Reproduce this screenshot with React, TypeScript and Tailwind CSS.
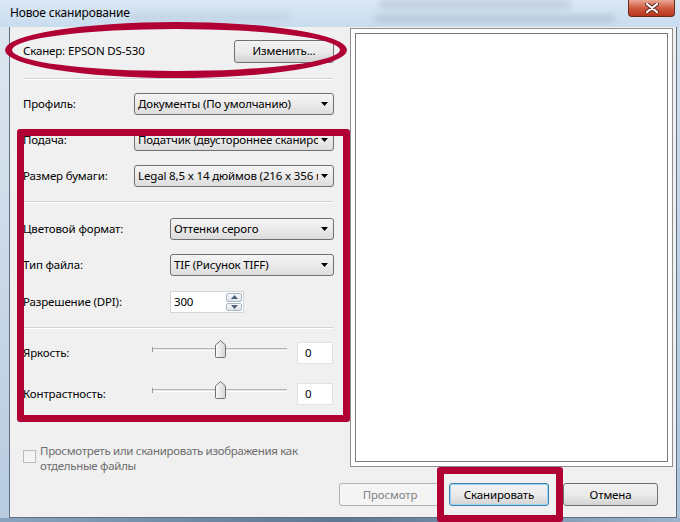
import React from "react";

function Combo({ width, text }: { width: string; text: string }) {
  return (
    <div
      className={`flex h-[22px] ${width} items-center rounded-[3px] border border-[#707070] bg-gradient-to-b from-[#f4f4f4] via-[#ebebeb] to-[#dcdcdc]`}
    >
      <span className="flex-1 overflow-hidden whitespace-nowrap pl-[3px]">{text}</span>
      <svg width="7" height="4" className="ml-[3px] mr-[5px] shrink-0">
        <path d="M0 0h7L3.5 4z" fill="#000" />
      </svg>
    </div>
  );
}

function Slider() {
  return (
    <div className="relative h-[22px] w-[135px]">
      {/* track */}
      <div className="absolute left-0 right-0 top-[6px] h-[3px] border-t border-b border-t-[#b5b5b5] border-b-white bg-[#e3e3e3]" />
      <div className="absolute left-0 top-[5px] h-[5px] w-px bg-[#9a9a9a]" />
      {/* thumb */}
      <svg className="absolute left-[63px] top-[-2px]" width="11" height="18">
        <defs>
          <linearGradient id="th" x1="0" y1="0" x2="1" y2="0">
            <stop offset="0" stopColor="#fbfbfb" />
            <stop offset="1" stopColor="#d4d4d4" />
          </linearGradient>
        </defs>
        <path d="M0.5 16.5V5L5.5 0.5L10.5 5V16.5Q10.5 17.5 9.5 17.5H1.5Q0.5 17.5 0.5 16.5Z" fill="url(#th)" stroke="#707070" />
      </svg>
    </div>
  );
}

function Btn({
  children,
  width,
  kind,
}: {
  children: React.ReactNode;
  width: string;
  kind: "disabled" | "default" | "normal";
}) {
  const look =
    kind === "disabled"
      ? "border-[#adb2b5] bg-[#f4f4f4] text-[#838383]"
      : kind === "default"
        ? "border-[#3c7fb1] bg-gradient-to-b from-[#f2f2f2] via-[#ebebeb] to-[#d3d3d3] shadow-[inset_0_0_0_1px_#9fd5f1] text-black"
        : "border-[#707070] bg-gradient-to-b from-[#f2f2f2] via-[#ebebeb] to-[#d3d3d3] text-black";
  return (
    <div className={`flex h-[23px] ${width} items-center justify-center rounded-[3px] border ${look}`}>
      {children}
    </div>
  );
}

export default function App() {
  return (
    <div className="relative flex h-[522px] w-[680px] flex-col overflow-hidden bg-[#c7d9ec] font-['Noto_Sans',sans-serif] text-[11.5px] tracking-[-0.15px] text-black">
      {/* Title bar (glass) */}
      <div className="relative flex h-[27px] items-start overflow-hidden bg-gradient-to-b from-[#dae7f4] to-[#c9dcef]">
        <div className="absolute left-[380px] top-[1px] h-[7px] w-[190px] bg-[#7f8fa0] opacity-30 blur-[3px]" />
        <div className="absolute left-[375px] top-[15px] h-[7px] w-[240px] bg-[#6f8094] opacity-25 blur-[3px]" />
        <div className="absolute left-[130px] top-[14px] h-[6px] w-[160px] bg-[#8797a8] opacity-20 blur-[3px]" />
        <span className="relative ml-[10px] mt-[5px] text-[12px] leading-[16px]">Новое сканирование</span>
        <div className="relative ml-auto mr-[5px] flex h-[17px] w-[47px] items-center justify-center rounded-b-[4px] border border-t-0 border-[#6b2a1e] bg-gradient-to-b from-[#e9a795] via-[#cf5a40] to-[#b8341d]">
          <svg width="14" height="10">
            <path d="M2 1L12 9M12 1L2 9" stroke="#5a2a22" strokeWidth="4" strokeLinecap="round" />
            <path d="M2 1L12 9M12 1L2 9" stroke="#ffffff" strokeWidth="2.2" strokeLinecap="round" />
          </svg>
        </div>
      </div>

      <div className="flex h-[491px]">
        <div className="w-[9px] bg-gradient-to-b from-[#dde6ef] to-[#b8cbe0]" />
        <div className="flex w-[668px] flex-col border-x border-b border-[#5f6f80] bg-[#f0f0f0]">
          <div className="flex items-start">
            {/* Left settings panel */}
            <div className="flex w-[340px] flex-col pl-[13px]">
              <div className="mt-[13px] flex h-[22px] w-[311px] items-center justify-between">
                <span>Сканер: EPSON DS-530</span>
                <Btn width="w-[100px]" kind="normal">
                  Изменить...
                </Btn>
              </div>
              <div className="mt-[16px] h-[2px] w-[310px] border-t border-b border-t-[#d2d2d2] border-b-white" />

              <div className="mt-[13px] flex items-center">
                <span className="w-[111px]">Профиль:</span>
                <Combo width="w-[200px]" text="Документы (По умолчанию)" />
              </div>
              <div className="mt-[14px] flex items-center">
                <span className="w-[111px]">Подача:</span>
                <Combo width="w-[200px]" text="Податчик (двустороннее сканирование)" />
              </div>
              <div className="mt-[14px] flex items-center">
                <span className="w-[111px]">Размер бумаги:</span>
                <Combo width="w-[200px]" text="Legal 8,5 x 14 дюймов (216 x 356 мм)" />
              </div>
              <div className="mt-[14px] h-[2px] w-[310px] border-t border-b border-t-[#d2d2d2] border-b-white" />

              <div className="mt-[15px] flex items-center">
                <span className="w-[147px]">Цветовой формат:</span>
                <Combo width="w-[164px]" text="Оттенки серого" />
              </div>
              <div className="mt-[14px] flex items-center">
                <span className="w-[147px]">Тип файла:</span>
                <Combo width="w-[164px]" text="TIF (Рисунок TIFF)" />
              </div>
              <div className="mt-[15px] flex items-center">
                <span className="w-[147px]">Разрешение (DPI):</span>
                <div className="flex h-[22px] w-[74px] border border-[#d5d5d5] bg-white">
                  <span className="flex-1 pl-[3px] leading-[20px]">300</span>
                  <div className="flex w-[17px] flex-col gap-px py-px pr-px">
                    <div className="flex flex-1 items-center justify-center rounded-[2px] border border-[#a9b6c4] bg-gradient-to-b from-[#f6f7f8] to-[#dfe4ea]">
                      <svg width="7" height="4">
                        <path d="M0 4h7L3.5 0z" fill="#4c607a" />
                      </svg>
                    </div>
                    <div className="flex flex-1 items-center justify-center rounded-[2px] border border-[#a9b6c4] bg-gradient-to-b from-[#f6f7f8] to-[#dfe4ea]">
                      <svg width="7" height="4">
                        <path d="M0 0h7L3.5 4z" fill="#4c607a" />
                      </svg>
                    </div>
                  </div>
                </div>
              </div>
              <div className="mt-[14px] h-[2px] w-[310px] border-t border-b border-t-[#d2d2d2] border-b-white" />

              <div className="mt-[13px] flex items-center">
                <span className="w-[129px]">Яркость:</span>
                <Slider />
                <div className="ml-[10px] flex h-[22px] w-[36px] items-center border border-[#e2e2e2] bg-white pl-[7px]">0</div>
              </div>
              <div className="mt-[19px] flex items-center">
                <span className="w-[129px]">Контрастность:</span>
                <Slider />
                <div className="ml-[10px] flex h-[22px] w-[36px] items-center border border-[#e2e2e2] bg-white pl-[7px]">0</div>
              </div>

              <div className="mt-[38px] flex items-start">
                <div className="mt-[7px] h-[13px] w-[13px] shrink-0 border border-[#bcbcbc] bg-gradient-to-br from-[#f0f0f0] to-[#f8f8f8]" />
                <span className="ml-[4px] text-[11.5px] leading-[15px] tracking-[-0.3px] text-[#6d6d6d]">
                  Просмотреть или сканировать изображения как
                  <br />
                  отдельные файлы
                </span>
              </div>
            </div>

            {/* Preview area */}
            <div className="mt-px h-[439px] w-[323px] border border-[#8f8f8f] bg-white p-[4px]">
              <div className="h-full w-full border border-[#7a7a7a] bg-white" />
            </div>
          </div>

          <div className="mt-[10px] flex justify-end pr-[18px]">
            <Btn width="w-[102px]" kind="disabled">
              Просмотр
            </Btn>
            <div className="ml-[8px]">
              <Btn width="w-[100px]" kind="default">
                Сканировать
              </Btn>
            </div>
            <div className="ml-[14px]">
              <Btn width="w-[95px]" kind="normal">
                Отмена
              </Btn>
            </div>
          </div>
        </div>
        <div className="flex-1 bg-gradient-to-b from-[#d3e1ee] to-[#a9c1da]" />
      </div>
      <div className="h-[4px] bg-gradient-to-r from-[#8aa4bf] via-[#5e7690] to-[#9db5cc]" />

      {/* Red annotation marks */}
      <div className="absolute left-[5px] top-[22px] h-[56px] w-[342px] rounded-[50%] border-[7px] border-[#b00034]" />
      <div className="absolute left-[17px] top-[129px] h-[293px] w-[333px] rounded-[3px] border-[7px] border-[#b00034]" />
      <div className="absolute left-[437px] top-[467px] h-[55px] w-[126px] rounded-[3px] border-[7px] border-[#b00034]" />
    </div>
  );
}
